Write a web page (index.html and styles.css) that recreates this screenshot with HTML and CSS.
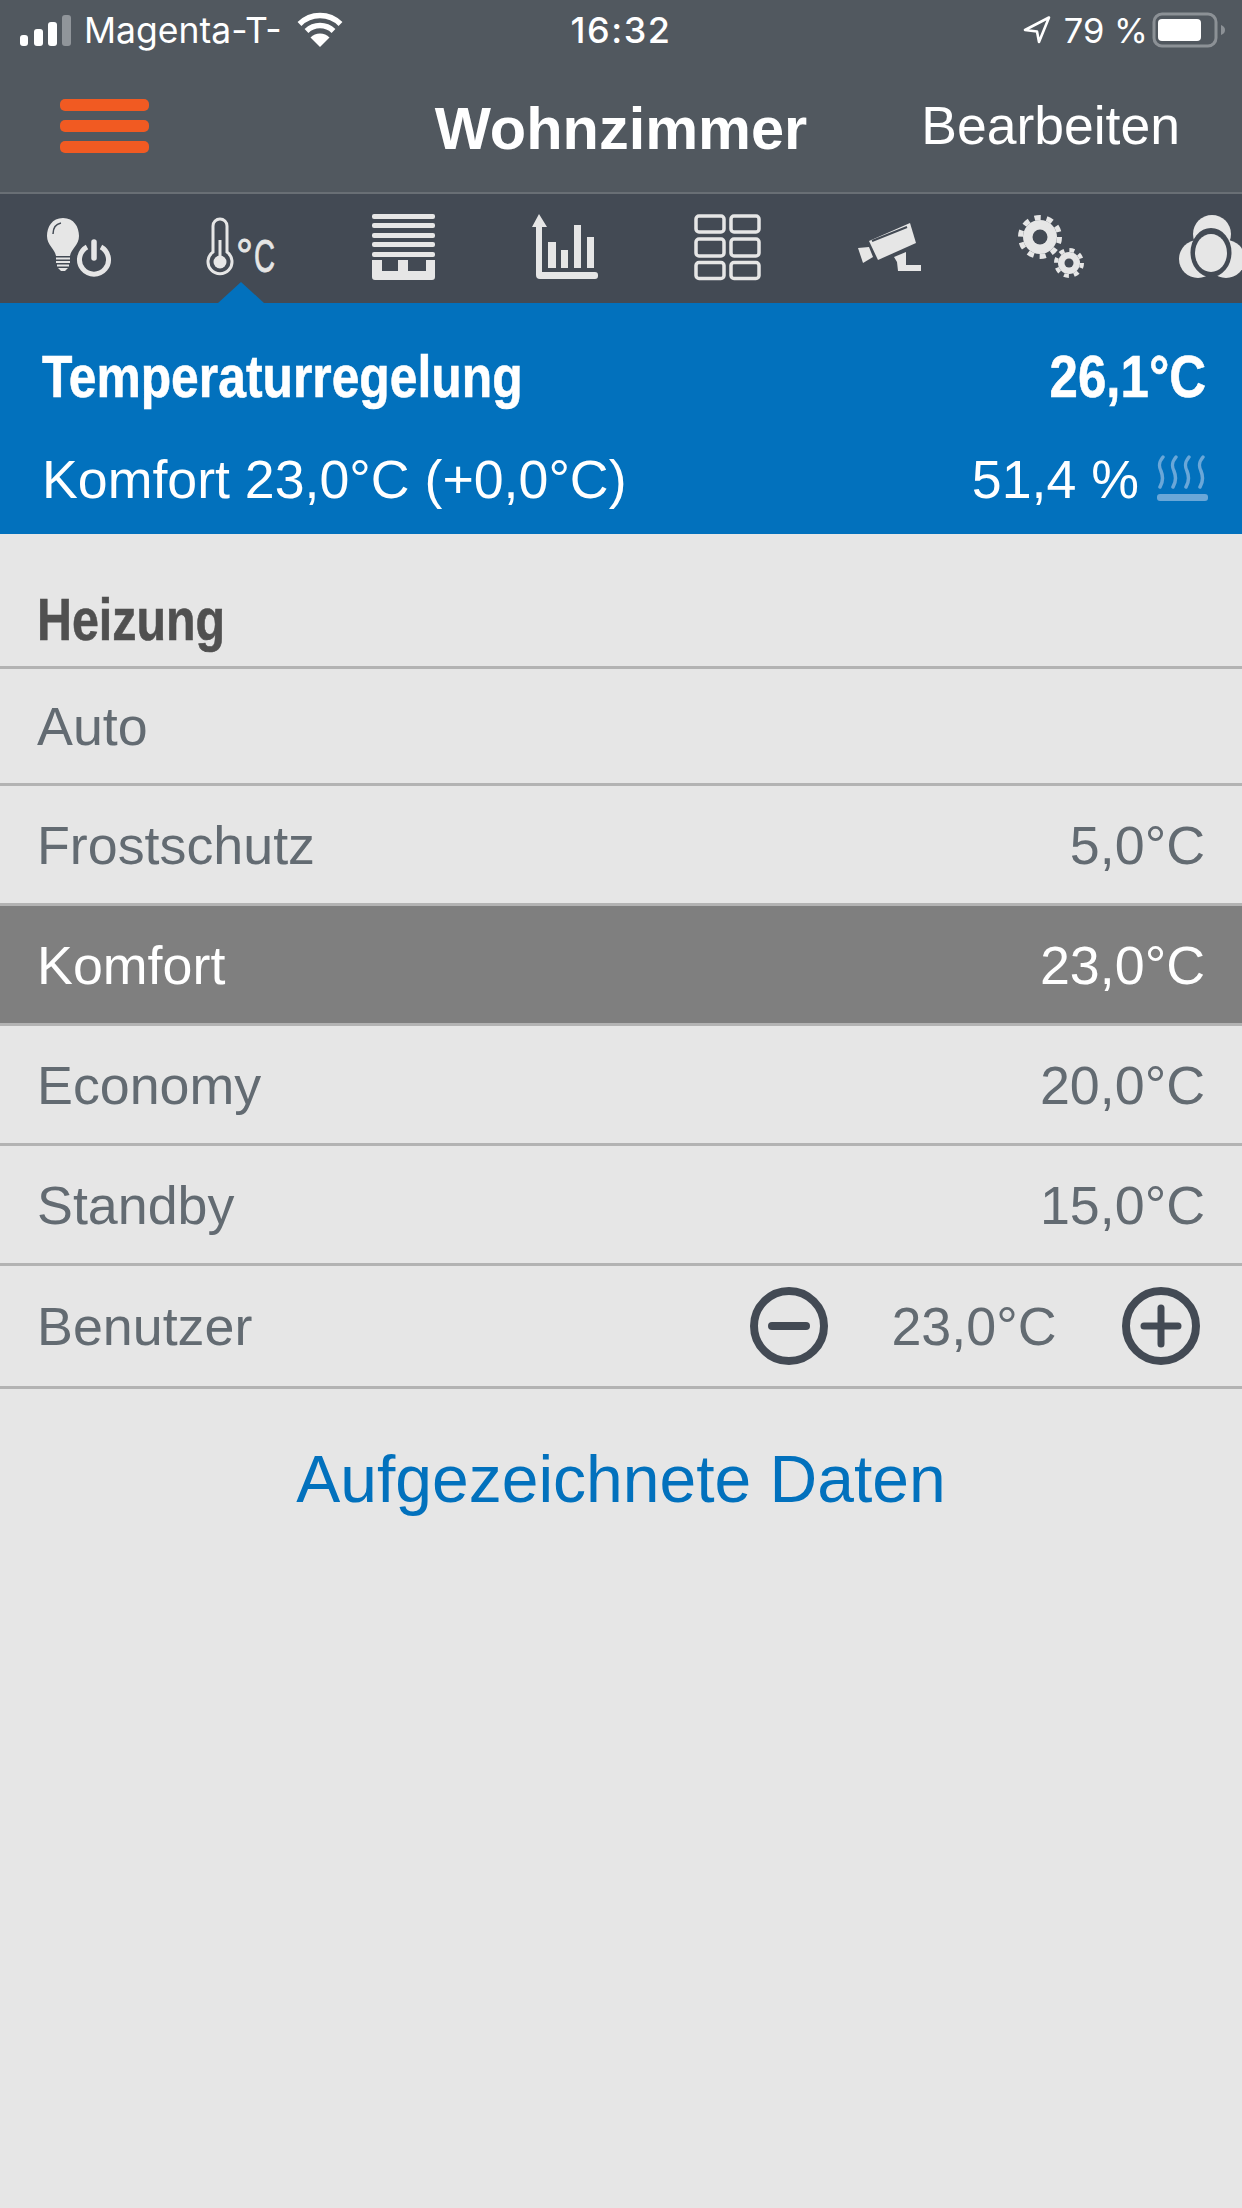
FILE: index.html
```html
<!DOCTYPE html>
<html lang="de">
<head>
<meta charset="utf-8">
<title>Wohnzimmer</title>
<link rel="stylesheet" href="styles.css">
</head>
<body>
<header class="top">
  <div class="status">
    <div class="status-left">
      <svg class="signal" viewBox="20 10 52 38" width="52" height="38">
        <rect x="20" y="34" width="8" height="11" rx="3" fill="#fff"/>
        <rect x="34" y="28" width="9" height="17" rx="3" fill="#fff"/>
        <rect x="48" y="21" width="9" height="24" rx="3" fill="#fff"/>
        <rect x="62" y="14" width="9" height="31" rx="3" fill="#90959a"/>
      </svg>
      <span class="carrier">Magenta-T-</span>
      <svg class="wifi" viewBox="295 10 48 38" width="48" height="38">
        <path d="M319 46 L309.5 36.5 A13.4 13.4 0 0 1 328.5 36.5Z" fill="#fff"/>
        <path d="M305.5 30 A19.5 19.5 0 0 1 332.5 30" fill="none" stroke="#fff" stroke-width="5.5"/>
        <path d="M298.5 23 A29 29 0 0 1 339.5 23" fill="none" stroke="#fff" stroke-width="5.5"/>
      </svg>
    </div>
    <span class="time">16:32</span>
    <div class="status-right">
      <svg class="loc" viewBox="1022 16 30 30" width="30" height="30">
        <path d="M1049 18.500 L1025 31 L1037 32.500 L1039 43Z" fill="none" stroke="#fff" stroke-width="2.600" stroke-linejoin="round"/>
      </svg>
      <span class="pct">79 %</span>
      <svg class="battery" viewBox="1153 11 74 38" width="74" height="38">
        <rect x="1155" y="14" width="62" height="32" rx="8" fill="none" stroke="#8c9196" stroke-width="3"/>
        <rect x="1159" y="19" width="43" height="22" rx="4" fill="#fff"/>
        <path d="M1222 25 C1225 26 1226 28 1226 30 C1226 32 1225 34 1222 35Z" fill="#8c9196"/>
      </svg>
    </div>
  </div>
  <nav class="nav">
    <div class="burger"><span></span><span></span><span></span></div>
    <h1 class="title">Wohnzimmer</h1>
    <a class="edit">Bearbeiten</a>
  </nav>
</header>

<div class="tabs">
  <div class="tab">
    <svg viewBox="-2 192 162 111" width="162" height="111">
      <path d="M63 218 C52 218 47 227 47 236 C47 245 55 249 56 256 H70 C71 249 79 245 79 236 C79 227 74 218 63 218Z" fill="#e6e6e6"/>
      <path d="M53 234 C53 228 56 224 61 223" fill="none" stroke="#434a54" stroke-width="1.500"/>
      <path d="M56 258.500 H70 M56 262 H70 M57 265.500 H69" stroke="#e6e6e6" stroke-width="2.200"/>
      <path d="M58 268 H68 L65 271 H61Z" fill="#e6e6e6"/>
      <path d="M87 247 A14.500 14.500 0 1 0 101 247" fill="none" stroke="#e6e6e6" stroke-width="5"/>
      <path d="M94 242 V258" stroke="#e6e6e6" stroke-width="5.500" stroke-linecap="round"/>
    </svg>
  </div>
  <div class="tab tab-active">
    <svg viewBox="160 192 162 111" width="162" height="111">
      <path d="M213 252 V226 A7 7 0 0 1 227 226 V252 A12 12 0 1 1 213 252Z" fill="none" stroke="#e6e6e6" stroke-width="3"/>
      <path d="M220 240 V256" stroke="#e6e6e6" stroke-width="3"/>
      <circle cx="220" cy="262" r="6.500" fill="#e6e6e6"/>
      <text class="deg" x="236" y="272" textLength="17" lengthAdjust="spacingAndGlyphs">°</text>
      <text class="deg" x="254" y="272" textLength="21" lengthAdjust="spacingAndGlyphs">C</text>
    </svg>
  </div>
  <div class="tab">
    <svg viewBox="322 192 162 111" width="162" height="111">
      <g fill="#e6e6e6">
        <rect x="372" y="214" width="63" height="5" rx="2"/>
        <rect x="372" y="223" width="63" height="5" rx="2"/>
        <rect x="372" y="233" width="63" height="5" rx="2"/>
        <rect x="372" y="242" width="63" height="5" rx="2"/>
        <rect x="372" y="252" width="63" height="5" rx="2"/>
        <path d="M372 260 H382 V271 H398 V260 H408 V271 H426 V260 H435 V277 Q435 280 432 280 H375 Q372 280 372 277Z"/>
      </g>
    </svg>
  </div>
  <div class="tab">
    <svg viewBox="484 192 162 111" width="162" height="111">
      <g fill="#e6e6e6">
        <path d="M539 214 L547 227 H542 V272 H595 Q598 272 598 275 V276 Q598 279 595 279 H540 Q536 279 536 275 V227 H532Z"/>
        <rect x="548" y="242" width="8" height="26"/>
        <rect x="561" y="250" width="7" height="18"/>
        <rect x="574" y="225" width="7" height="43"/>
        <rect x="587" y="237" width="7" height="31"/>
      </g>
    </svg>
  </div>
  <div class="tab">
    <svg viewBox="646 192 162 111" width="162" height="111">
      <g fill="none" stroke="#e6e6e6" stroke-width="3.500">
        <rect x="696" y="216" width="28" height="16" rx="3"/>
        <rect x="731" y="216" width="28" height="16" rx="3"/>
        <rect x="696" y="239" width="28" height="17" rx="3"/>
        <rect x="731" y="239" width="28" height="17" rx="3"/>
        <rect x="696" y="262.500" width="28" height="16" rx="3"/>
        <rect x="731" y="262.500" width="28" height="16" rx="3"/>
      </g>
    </svg>
  </div>
  <div class="tab">
    <svg viewBox="808 192 162 111" width="162" height="111">
      <g fill="#e6e6e6">
        <path d="M869 241 L910 223 L916 243 L878 260Z"/>
        <path d="M858 248 L869 247 L873 257 L863 263Z"/>
        <path d="M894 257 L906 252 V265 H921 V271 H898 L897 262Z"/>
      </g>
      <path d="M872 241 L907 227" stroke="#434a54" stroke-width="2"/>
    </svg>
  </div>
  <div class="tab">
    <svg viewBox="970 192 162 111" width="162" height="111">
      <circle cx="1040" cy="237" r="17" fill="#e6e6e6"/>
      <circle cx="1040" cy="237" r="19.500" fill="none" stroke="#e6e6e6" stroke-width="5" stroke-dasharray="6.300 5.950"/>
      <circle cx="1040" cy="237" r="7.500" fill="#434a54"/>
      <circle cx="1069" cy="263" r="11" fill="#e6e6e6"/>
      <circle cx="1069" cy="263" r="13" fill="none" stroke="#e6e6e6" stroke-width="4" stroke-dasharray="5 5.210"/>
      <circle cx="1069" cy="263" r="4.500" fill="#434a54"/>
    </svg>
  </div>
  <div class="tab">
    <svg viewBox="1132 192 162 111" width="162" height="111">
      <circle cx="1212" cy="234" r="19" fill="#e6e6e6"/>
      <circle cx="1198" cy="259" r="19" fill="#e6e6e6"/>
      <circle cx="1226" cy="259" r="19" fill="#e6e6e6"/>
      <ellipse cx="1211" cy="252.500" rx="20.500" ry="24.500" fill="#434a54"/>
      <ellipse cx="1211" cy="253" rx="16" ry="19" fill="#e6e6e6"/>
    </svg>
  </div>
</div>

<section class="banner">
  <div class="banner-line banner-head">
    <span class="narrow narrow-left">Temperaturregelung</span>
    <span class="narrow narrow-right">26,1°C</span>
  </div>
  <div class="banner-line banner-sub">
    <span>Komfort 23,0°C (+0,0°C)</span>
    <span class="banner-hum">51,4 %
      <svg class="heat" viewBox="1155 455 52 47" width="52" height="47">
        <g fill="none" stroke="#6aa7d8" stroke-width="3.500" stroke-linecap="round">
          <path d="M1161 457 C1156 463 1157 467 1159 471 C1161 476 1161 482 1158 487"/>
          <path d="M1174 457 C1169 463 1170 467 1172 471 C1174 476 1174 482 1171 487"/>
          <path d="M1187 457 C1182 463 1183 467 1185 471 C1187 476 1187 482 1184 487"/>
          <path d="M1201 457 C1196 463 1197 467 1199 471 C1201 476 1201 482 1198 487"/>
        </g>
        <rect x="1155" y="494" width="51" height="7" rx="3" fill="#6aa7d8"/>
      </svg>
    </span>
  </div>
</section>

<main class="content">
  <h2 class="section"><span class="narrow narrow-heading">Heizung</span></h2>
  <ul class="list">
    <li class="row row-first"><span>Auto</span></li>
    <li class="row"><span>Frostschutz</span><span>5,0°C</span></li>
    <li class="row row-selected"><span>Komfort</span><span>23,0°C</span></li>
    <li class="row"><span>Economy</span><span>20,0°C</span></li>
    <li class="row"><span>Standby</span><span>15,0°C</span></li>
    <li class="row row-last">
      <span>Benutzer</span>
      <div class="stepper">
        <svg viewBox="0 0 78 78" width="78" height="78">
          <circle cx="39" cy="39" r="35" fill="none" stroke="#434a54" stroke-width="8"/>
          <path d="M22 39 H56" stroke="#434a54" stroke-width="8" stroke-linecap="round"/>
        </svg>
        <span class="step-value">23,0°C</span>
        <svg viewBox="0 0 78 78" width="78" height="78">
          <circle cx="39" cy="39" r="35" fill="none" stroke="#434a54" stroke-width="8"/>
          <path d="M22 39 H56 M39 21 V57" stroke="#434a54" stroke-width="7" stroke-linecap="round"/>
        </svg>
      </div>
    </li>
  </ul>
  <a class="link">Aufgezeichnete Daten</a>
</main>
</body>
</html>
```

FILE: styles.css
```css
* { box-sizing: border-box; }
html, body { margin: 0; padding: 0; }
body {
  width: 1242px;
  height: 2208px;
  overflow: hidden;
  background: #e6e6e6;
  font-family: "Liberation Sans", Arial, sans-serif;
  color: #636b72;
}
svg { display: block; flex: none; }

.top { background: #51585f; height: 194px; border-bottom: 2px solid #696f75; }
.status {
  height: 60px;
  display: grid;
  grid-template-columns: 1fr auto 1fr;
  align-items: center;
  color: #fff;
  font-family: Inter, "Liberation Sans", sans-serif;
  font-size: 35.5px;
  padding: 0 16px;
}
.status-left { display: flex; align-items: center; }
.signal { margin-left: 4px; }
.carrier { margin-left: 12px; }
.wifi { margin-left: 14px; }
.status-right { display: flex; align-items: center; justify-content: flex-end; }
.pct { margin-left: 12px; font-size: 34.5px; }
.battery { margin-left: 4px; }
.time { font-weight: 500; font-size: 36px; letter-spacing: 1.5px; }

.nav {
  height: 132px;
  display: grid;
  grid-template-columns: 1fr auto 1fr;
  align-items: center;
  color: #fff;
  padding: 0 60px;
}
.burger { display: flex; flex-direction: column; gap: 9px; width: 89px; }
.burger span { height: 12px; border-radius: 5px; background: #f15a22; }
.title { margin: 6px 0 0; font-size: 59.5px; font-weight: 700; line-height: 70px; }
.edit { justify-self: end; font-size: 53.5px; line-height: 60px; margin-right: 2px; }

.tabs {
  height: 109px;
  background: #434a54;
  display: flex;
  margin-left: -2px;
  overflow: hidden;
  width: 1244px;
  position: relative;
}
.tab { width: 162px; flex: none; position: relative; height: 109px; }
.tab svg { margin-top: -2px; }
.tab-active::after {
  content: "";
  position: absolute;
  left: 58px;
  bottom: 0;
  width: 46px;
  height: 21px;
  background: #0271bd;
  clip-path: polygon(50% 0, 100% 100%, 0 100%);
}
.deg { font-family: "Liberation Sans", sans-serif; font-size: 46px; fill: #e6e6e6; stroke: #e6e6e6; stroke-width: 0.8px; }

.banner { background: #0271bd; height: 231px; color: #fff; padding: 0 36px 0 42px; }
.banner-line { display: flex; justify-content: space-between; align-items: center; }
.banner-head {
  height: 112px;
  padding-top: 34px;
  font-weight: 700;
  font-size: 60px;
}
.banner-sub { height: 119px; padding-top: 8px; font-size: 53.7px; }
.banner-hum { display: flex; align-items: center; gap: 18px; margin-right: -3px; }

.narrow { display: inline-block; -webkit-text-stroke: 0.6px currentColor; }
.narrow-left { transform: scaleX(0.83); transform-origin: left center; }
.narrow-right { transform: scaleX(0.85); transform-origin: right center; }
.narrow-heading { transform: scaleX(0.82); transform-origin: left center; }

.content { display: flex; flex-direction: column; }
.section {
  margin: 0;
  height: 132px;
  padding: 52px 37px 0;
  font-weight: 700;
  font-size: 59px;
  line-height: 68px;
  color: #505050;
}
.list { list-style: none; margin: 0; padding: 0; border-top: 3px solid #b3b3b3; }
.row {
  height: 120px;
  padding: 0 37px;
  display: flex;
  align-items: center;
  justify-content: space-between;
  font-size: 53.8px;
  border-bottom: 3px solid #b3b3b3;
}
.row-first { height: 117px; }
.row-last { height: 123px; padding-right: 42px; }
.row-selected { background: #7f7f7f; color: #fff; }
.stepper { display: flex; align-items: center; }
.step-value { width: 294px; text-align: center; padding-right: 2px; }
.link {
  margin-top: 52px;
  text-align: center;
  font-size: 66px;
  line-height: 76px;
  color: #0271bd;
}
```
